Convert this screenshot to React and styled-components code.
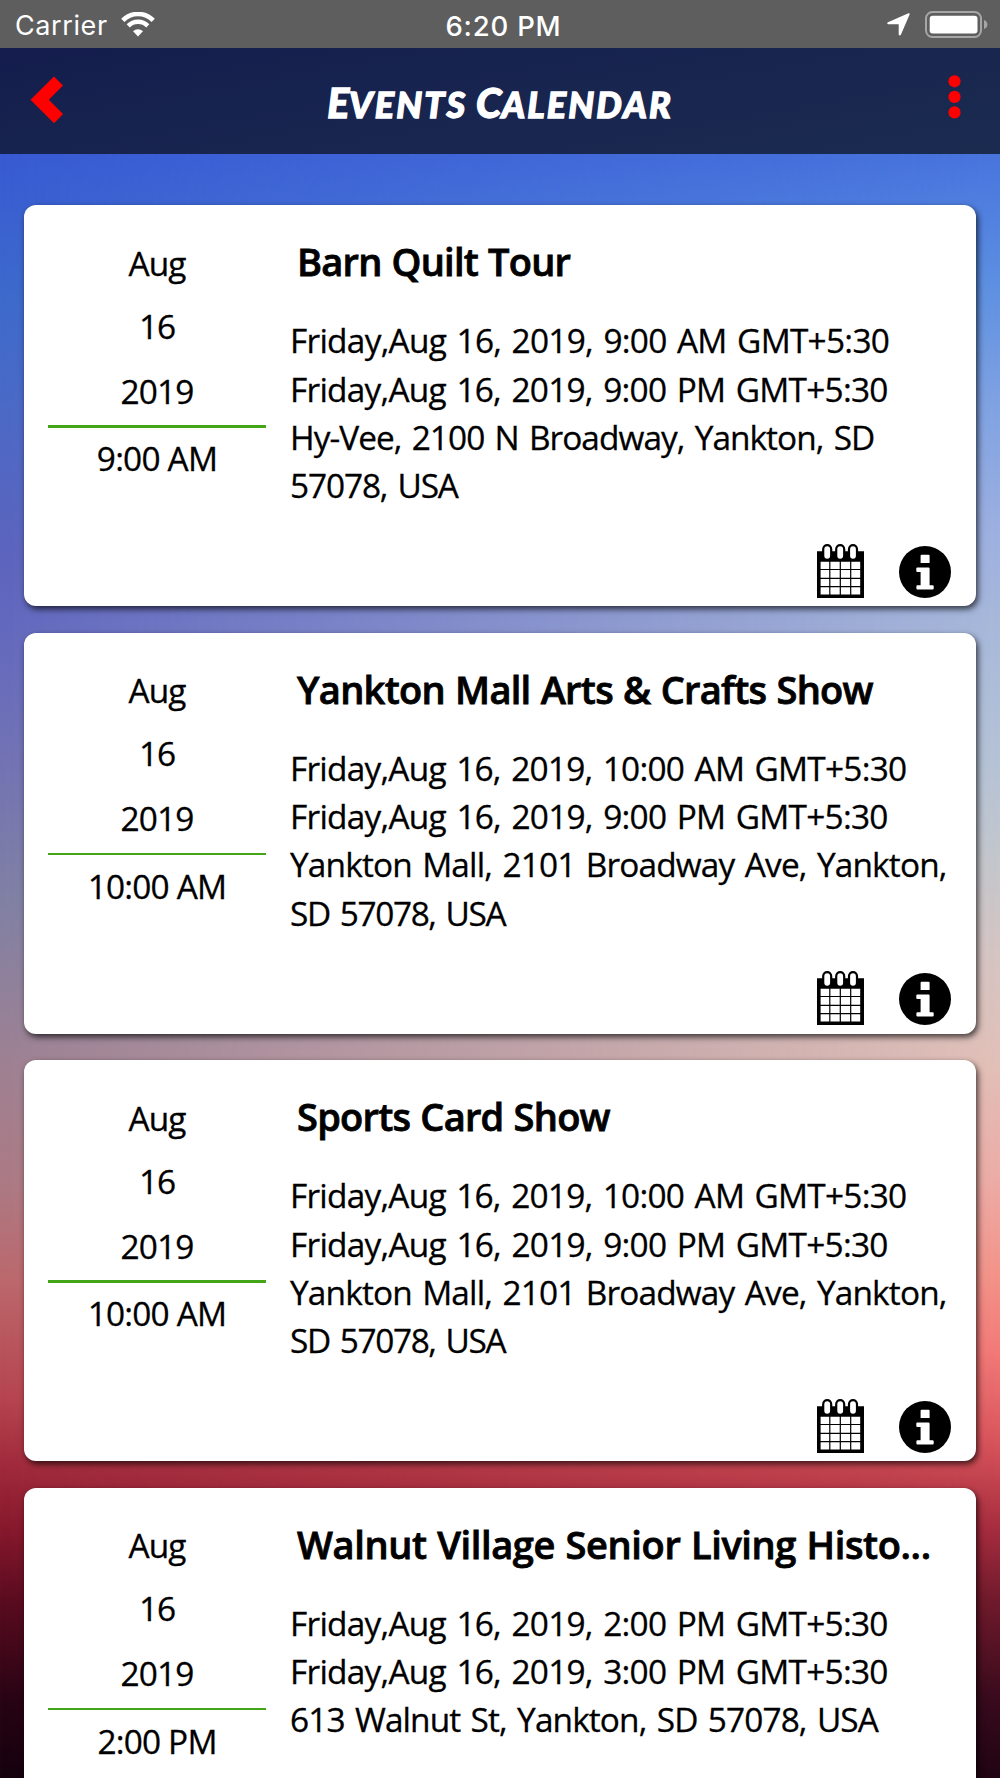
import React from 'react';
import styled, { createGlobalStyle } from 'styled-components';

const Global = createGlobalStyle`
  body { margin: 0; overflow: hidden; }
  *, *::before, *::after { box-sizing: border-box; }
`;

const leftSky = `linear-gradient(180deg,#385ad3 154px,#3d6acb 300px,#4a69c6 400px,#5d64bd 560px,#6268be 620px,#7272b4 760px,#8080a4 900px,#9d8193 1060px,#ab7a85 1180px,#bb686c 1280px,#b5444f 1400px,#a22c3d 1460px,#86182c 1530px,#5b0c20 1600px,#280414 1700px,#16020f 1778px)`;
const rightSky = `linear-gradient(180deg,#4874dd 154px,#5c8fe1 280px,#7fa2e2 400px,#9db0e0 530px,#a7b8da 620px,#b5c3d6 760px,#c4c7cc 860px,#d6c4c2 960px,#e1c0b8 1060px,#ecaca6 1180px,#f39288 1280px,#f27a78 1350px,#d9555c 1440px,#a52c3e 1530px,#701a2c 1600px,#380a1c 1700px,#200413 1778px)`;

const Screen = styled.main`
  position: relative;
  isolation: isolate;
  width: 1000px;
  height: 1778px;
  overflow: hidden;
  background: ${leftSky};
  color: #000;
  font-family: "Trebuchet MS", "Open Sans", sans-serif;
  &::before {
    content: "";
    position: absolute;
    inset: 0;
    z-index: -1;
    background: ${rightSky};
    mask-image: linear-gradient(90deg, transparent, #000);
  }
`;

const StatusBar = styled.div`
  display: grid;
  grid-template-columns: 1fr auto 1fr;
  align-items: center;
  height: 48px;
  padding: 4px 12px 0 15px;
  background: #5e5e5e;
  color: #fff;
  font: 400 27px/44px Inter, sans-serif;
`;
const Carrier = styled.div`
  display: flex;
  align-items: center;
  gap: 13px;
  letter-spacing: 0.6px;
  svg { margin-top: -3px; }
`;
const Clock = styled.div`
  padding-left: 4px;
  font-weight: 550;
  font-size: 27.5px;
  letter-spacing: 0.8px;
`;
const StatusIcons = styled.div`
  display: flex;
  justify-content: flex-end;
  align-items: center;
  gap: 15px;
  svg { margin-top: -3px; }
`;

const Header = styled.header`
  display: grid;
  grid-template-columns: 100px 1fr 100px;
  height: 106.4px;
  background: linear-gradient(170deg, #141d4d, #18254f 50%, #1b2b50);
`;
const HeaderButton = styled.button`
  display: flex;
  justify-content: ${(p) => p.$side};
  align-items: flex-start;
  border: 0;
  background: none;
  padding: ${(p) => p.$pad};
`;
const Heading = styled.h1`
  margin: 0;
  padding-top: 27px;
  text-align: center;
  color: #fff;
  white-space: nowrap;
  font: italic 900 41px/56px "Permanent Marker", Lato, sans-serif;
  -webkit-text-stroke: 1.3px #fff;
`;
const SmallCaps = styled.span`
  font-size: 36px;
  letter-spacing: ${(p) => p.$track}px;
`;

const List = styled.section`
  display: flex;
  flex-direction: column;
  gap: 26.3px;
  padding: 50.8px 24px 0;
`;
const Card = styled.article`
  display: grid;
  grid-template-columns: 218px 1fr;
  column-gap: 24px;
  flex: none;
  height: 401.2px;
  padding: 0 24px;
  border-radius: 12px;
  background: #fff;
  box-shadow: 2px 3px 6px rgba(0, 0, 0, 0.7);
`;
const DateColumn = styled.div`
  display: flex;
  flex-direction: column;
  align-items: center;
  padding-top: 33.5px;
  font-size: 33.4px;
`;
const DateText = styled.div`
  height: ${(p) => p.$h}px;
  line-height: 48px;
  white-space: nowrap;
  letter-spacing: ${(p) => p.$track}px;
  -webkit-text-stroke: 0.3px #000;
`;
const Rule = styled.hr`
  width: 100%;
  height: 2.5px;
  margin: 0 0 6.5px;
  border: 0;
  background: #45a519;
`;
const Details = styled.div`
  display: flex;
  flex-direction: column;
  padding-top: 28px;
`;
const Title = styled.h2`
  margin: 0 0 27.3px;
  padding-left: 7px;
  white-space: nowrap;
  font-size: 38px;
  line-height: 56px;
  font-weight: 600;
  letter-spacing: ${(p) => p.$track}px;
  word-spacing: 1px;
  -webkit-text-stroke: 0.8px #000;
`;
const Line = styled.div`
  height: 48.2px;
  line-height: 48.2px;
  font-size: 33.4px;
  white-space: nowrap;
  letter-spacing: ${(p) => p.$track}px;
  word-spacing: 2.5px;
  -webkit-text-stroke: 0.3px #000;
`;
const Actions = styled.div`
  display: flex;
  justify-content: flex-end;
  align-items: flex-end;
  gap: 35px;
  margin: auto 1.5px 8.6px 0;
`;

const WifiIcon = () => (
  <svg width="34" height="25" viewBox="0 0 34 25" fill="none" stroke="#fff">
    <path d="M1.8 8.3a21.5 21.5 0 0 1 30.4 0" strokeWidth="4.6" />
    <path d="M7.2 13.9a13.8 13.8 0 0 1 19.6 0" strokeWidth="4.4" />
    <path d="M17 24.4l-5-5.1a7.2 7.2 0 0 1 10 0z" fill="#fff" stroke="none" />
  </svg>
);
const LocationIcon = () => (
  <svg width="23" height="23" viewBox="0 0 23 23" fill="#fff">
    <path d="M1 9.3 21.4.3q1.6-.5 1.2 1.1L14 21.6q-1.4 1.8-2.3-.2V11.3H1.2Q-.6 10.6 1 9.3z" />
  </svg>
);
const BatteryIcon = () => (
  <svg width="63" height="27" viewBox="0 0 63 27">
    <rect x="1" y="1" width="55" height="25" rx="6.5" fill="none" stroke="#a6a6a6" strokeWidth="2" />
    <rect x="4.7" y="4.7" width="47.8" height="17.8" rx="3" fill="#fff" />
    <path d="M59 9q3.4 1.2 3.4 4.5T59 18z" fill="#a6a6a6" />
  </svg>
);
const BackIcon = () => (
  <svg width="34" height="48" viewBox="0 0 34 48">
    <path d="M24 .5 33 9.6 18.8 23.7 33 38 24 47.2.5 23.7z" fill="#f00" />
  </svg>
);
const MoreIcon = () => (
  <svg width="13" height="44" viewBox="0 0 13 44" fill="#f00">
    <circle cx="6.5" cy="6.3" r="6.1" />
    <circle cx="6.5" cy="21.9" r="6.1" />
    <circle cx="6.5" cy="37.4" r="6.1" />
  </svg>
);
const CalendarIcon = () => (
  <svg width="47" height="54" viewBox="0 0 47 54">
    <path d="M0 7.2h47V54H0z" />
    <g fill="#fff" stroke="#000" strokeWidth="2.2">
      <rect x="6.2" y="1.2" width="8" height="14.6" rx="4" />
      <rect x="19.2" y="1.2" width="8" height="14.6" rx="4" />
      <rect x="32" y="1.2" width="8" height="14.6" rx="4" />
    </g>
    <path d="M3.6 17.8h39.6v32.6H3.6z" fill="#fff" />
    <path d="M12.8 17v34M23.3 17v34M33.7 17v34M3 25.5h41M3 34.4h41M3 42.7h41" stroke="#000" strokeWidth="1.2" />
  </svg>
);
const InfoIcon = () => (
  <svg width="52" height="52" viewBox="0 0 52 52">
    <circle cx="26" cy="26" r="26" />
    <path d="M22.6 8.7h7q1 0 1 1v7.2h-9V9.7q0-1 1-1zM18.3 21.6h11.2q1.1 0 1.1 1.1v16.5h3q1.1 0 1.1 1v2.2q0 1-1.1 1H18.4q-1 0-1-1v-2.2q0-1 1-1h3.2V25.9h-3.3q-1 0-1-1v-2.3q0-1 1-1z" fill="#fff" />
  </svg>
);

const EVENTS = [
  {
    title: ['Barn Quilt Tour', -0.78], time: ['9:00 AM', -0.8],
    lines: [['Friday,Aug 16, 2019, 9:00 AM GMT+5:30', -0.73], ['Friday,Aug 16, 2019, 9:00 PM GMT+5:30', -0.74], ['Hy-Vee, 2100 N Broadway, Yankton, SD', -0.95], ['57078, USA', -1.12]],
  },
  {
    title: ['Yankton Mall Arts & Crafts Show', -0.7], time: ['10:00 AM', -0.8],
    lines: [['Friday,Aug 16, 2019, 10:00 AM GMT+5:30', -0.76], ['Friday,Aug 16, 2019, 9:00 PM GMT+5:30', -0.74], ['Yankton Mall, 2101 Broadway Ave, Yankton,', -0.84], ['SD 57078, USA', -1.35]],
  },
  {
    title: ['Sports Card Show', -0.75], time: ['10:00 AM', -0.8],
    lines: [['Friday,Aug 16, 2019, 10:00 AM GMT+5:30', -0.76], ['Friday,Aug 16, 2019, 9:00 PM GMT+5:30', -0.74], ['Yankton Mall, 2101 Broadway Ave, Yankton,', -0.84], ['SD 57078, USA', -1.35]],
  },
  {
    title: ['Walnut Village Senior Living Histo...', -0.37], time: ['2:00 PM', -0.8],
    lines: [['Friday,Aug 16, 2019, 2:00 PM GMT+5:30', -0.74], ['Friday,Aug 16, 2019, 3:00 PM GMT+5:30', -0.74], ['613 Walnut St, Yankton, SD 57078, USA', -0.88]],
  },
];

function EventCard({ event }) {
  return (
    <Card>
      <DateColumn>
        <DateText $h={63.3} $track={-0.9}>Aug</DateText>
        <DateText $h={64.9} $track={-1.2}>16</DateText>
        <DateText $h={58.5} $track={-0.9}>2019</DateText>
        <Rule />
        <DateText $h={48} $track={event.time[1]}>{event.time[0]}</DateText>
      </DateColumn>
      <Details>
        <Title $track={event.title[1]}>{event.title[0]}</Title>
        {event.lines.map(([text, track], i) => <Line key={i} $track={track}>{text}</Line>)}
        <Actions><CalendarIcon /><InfoIcon /></Actions>
      </Details>
    </Card>
  );
}

export default function App() {
  return (
    <Screen>
      <Global />
      <StatusBar>
        <Carrier>Carrier <WifiIcon /></Carrier>
        <Clock>6:20 PM</Clock>
        <StatusIcons><LocationIcon /><BatteryIcon /></StatusIcons>
      </StatusBar>
      <Header>
        <HeaderButton $side="flex-start" $pad="28px 0 0 30px" aria-label="Back"><BackIcon /></HeaderButton>
        <Heading>E<SmallCaps $track={2.1}>VENTS</SmallCaps> C<SmallCaps $track={2.1}>ALENDAR</SmallCaps></Heading>
        <HeaderButton $side="flex-end" $pad="27px 39.5px 0 0" aria-label="More"><MoreIcon /></HeaderButton>
      </Header>
      <List>
        {EVENTS.map((e, i) => <EventCard key={i} event={e} />)}
      </List>
    </Screen>
  );
}
